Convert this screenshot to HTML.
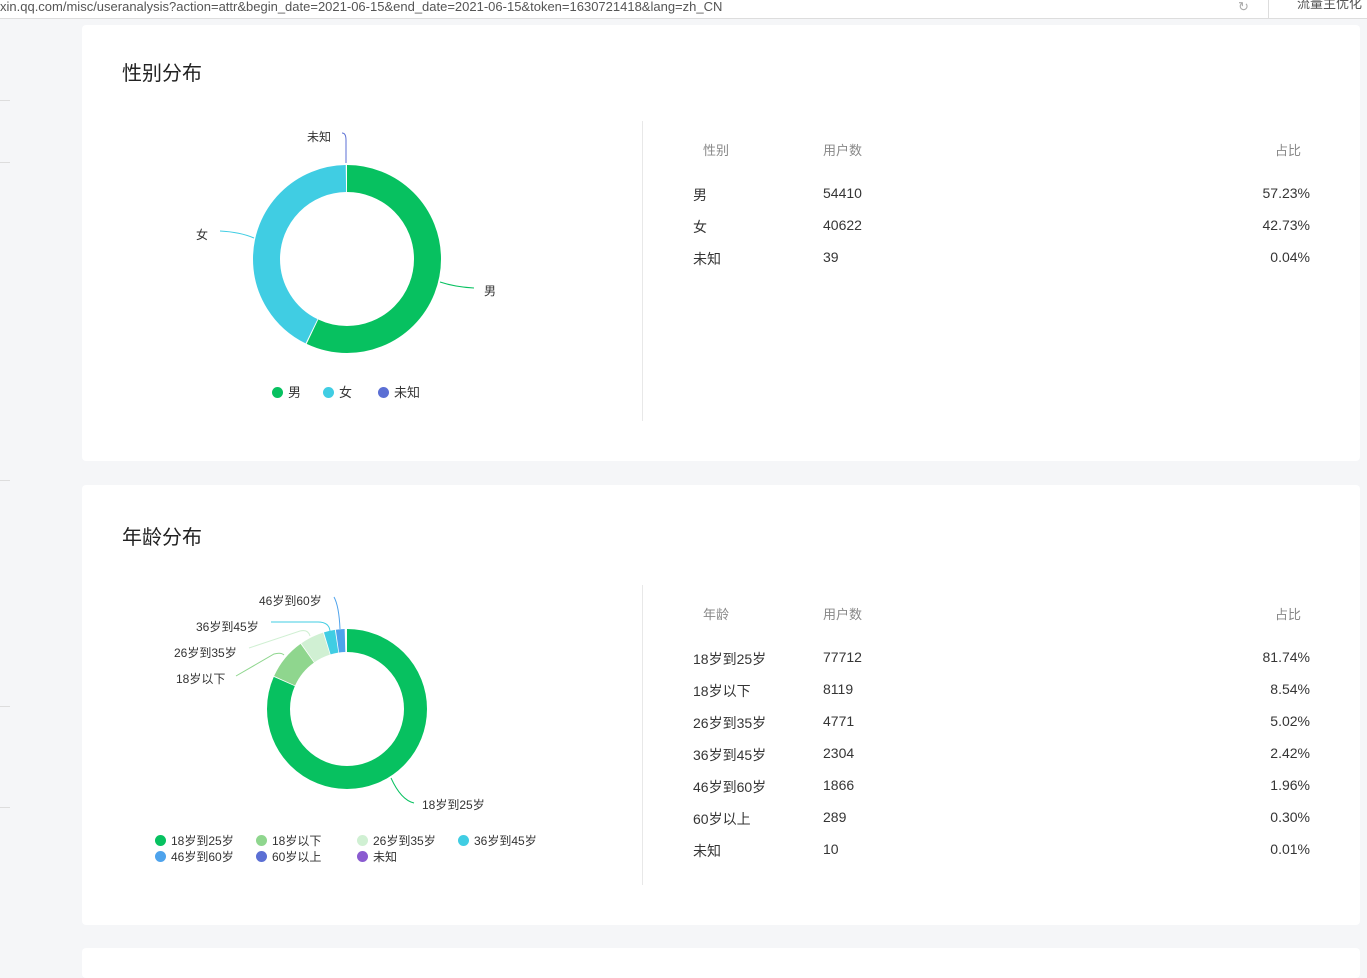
<!DOCTYPE html><html><head><meta charset="utf-8"><style>
body{margin:0;width:1367px;height:963px;background:#f5f6f8;font-family:"Liberation Sans","Noto Sans CJK SC",sans-serif;position:relative;overflow:hidden;color:#353535}
.bar{position:absolute;left:0;top:0;width:1367px;height:18px;background:#fff;border-bottom:1px solid #ddd;font-size:13px;color:#555;line-height:14px}
.card{position:absolute;left:82px;width:1278px;background:#fff;border-radius:4px}
.t{position:absolute;font-size:19px;color:#222}
.a{position:absolute;font-size:14px;white-space:nowrap}
.h{position:absolute;font-size:13px;color:#888}
.r{text-align:right;width:100px}
.div{position:absolute;left:560px;width:1px;background:#e8e8e8}
.s{position:absolute;font-size:12px;color:#333;white-space:nowrap}
.dot{display:inline-block;width:11px;height:11px;border-radius:50%;vertical-align:-1px;margin-right:5px}
</style></head><body>
<div class="bar"><span style="position:absolute;left:0;top:0">xin.qq.com/misc/useranalysis?action=attr&amp;begin_date=2021-06-15&amp;end_date=2021-06-15&amp;token=1630721418&amp;lang=zh_CN</span><span style="position:absolute;left:1238px;top:0;color:#aaa">↻</span><span style="position:absolute;left:1268px;top:0;width:1px;height:18px;background:#ddd"></span><span style="position:absolute;left:1297px;top:-3px">流量主优化</span></div>
<div style="position:absolute;left:0;top:100px;width:10px;height:1px;background:#ddd"></div>
<div style="position:absolute;left:0;top:162px;width:10px;height:1px;background:#ddd"></div>
<div style="position:absolute;left:0;top:480px;width:10px;height:1px;background:#ddd"></div>
<div style="position:absolute;left:0;top:706px;width:10px;height:1px;background:#ddd"></div>
<div style="position:absolute;left:0;top:807px;width:10px;height:1px;background:#ddd"></div>

<div class="card" style="top:25px;height:436px">
<div class="t" style="left:40px;top:32px;font-size:20px">性别分布</div>
<div class="div" style="top:96px;height:300px"></div>
<div class="h" style="left:621px;top:115px">性别</div><div class="h" style="left:741px;top:115px">用户数</div><div class="h r" style="left:1119px;top:115px">占比</div>
<div class="a" style="left:611px;top:160px">男</div><div class="a" style="left:741px;top:160px">54410</div><div class="a r" style="left:1128px;top:160px">57.23%</div>
<div class="a" style="left:611px;top:192px">女</div><div class="a" style="left:741px;top:192px">40622</div><div class="a r" style="left:1128px;top:192px">42.73%</div>
<div class="a" style="left:611px;top:224px">未知</div><div class="a" style="left:741px;top:224px">39</div><div class="a r" style="left:1128px;top:224px">0.04%</div>
</div>
<div class="card" style="top:485px;height:440px">
<div class="t" style="left:40px;top:36px;font-size:20px">年龄分布</div>
<div class="div" style="top:100px;height:300px"></div>
<div class="h" style="left:621px;top:119px">年龄</div><div class="h" style="left:741px;top:119px">用户数</div><div class="h r" style="left:1119px;top:119px">占比</div>
<div class="a" style="left:611px;top:164px">18岁到25岁</div><div class="a" style="left:741px;top:164px">77712</div><div class="a r" style="left:1128px;top:164px">81.74%</div>
<div class="a" style="left:611px;top:196px">18岁以下</div><div class="a" style="left:741px;top:196px">8119</div><div class="a r" style="left:1128px;top:196px">8.54%</div>
<div class="a" style="left:611px;top:228px">26岁到35岁</div><div class="a" style="left:741px;top:228px">4771</div><div class="a r" style="left:1128px;top:228px">5.02%</div>
<div class="a" style="left:611px;top:260px">36岁到45岁</div><div class="a" style="left:741px;top:260px">2304</div><div class="a r" style="left:1128px;top:260px">2.42%</div>
<div class="a" style="left:611px;top:292px">46岁到60岁</div><div class="a" style="left:741px;top:292px">1866</div><div class="a r" style="left:1128px;top:292px">1.96%</div>
<div class="a" style="left:611px;top:324px">60岁以上</div><div class="a" style="left:741px;top:324px">289</div><div class="a r" style="left:1128px;top:324px">0.30%</div>
<div class="a" style="left:611px;top:356px">未知</div><div class="a" style="left:741px;top:356px">10</div><div class="a r" style="left:1128px;top:356px">0.01%</div>
</div>
<div class="card" style="top:948px;height:30px"></div>

<svg style="position:absolute;left:0;top:0" width="1367" height="963">
<g transform="rotate(-90 347 259)" fill="none" stroke-width="27">
<circle cx="347" cy="259" r="80.5" stroke="#07c160" stroke-dasharray="288.5 600"/>
<circle cx="347" cy="259" r="80.5" stroke="#40cde3" stroke-dasharray="215 600" stroke-dashoffset="-289.5"/>
</g>
<g fill="none" stroke-width="1">
<path d="M346 163 L346 140 Q346 133 342 133" stroke="#5b6fd4"/>
<path d="M254 238 Q240 232 220 231" stroke="#40cde3"/>
<path d="M440 282 Q455 287 474 288" stroke="#07c160"/>
</g>
<g transform="rotate(-90 347 709)" fill="none" stroke-width="23">
<circle cx="347" cy="709" r="68.5" stroke="#07c160" stroke-dasharray="351 600"/>
<circle cx="347" cy="709" r="68.5" stroke="#8fd68e" stroke-dasharray="36 600" stroke-dashoffset="-351.8"/>
<circle cx="347" cy="709" r="68.5" stroke="#d0f0d3" stroke-dasharray="20.8 600" stroke-dashoffset="-388.6"/>
<circle cx="347" cy="709" r="68.5" stroke="#40cde3" stroke-dasharray="9.6 600" stroke-dashoffset="-410.2"/>
<circle cx="347" cy="709" r="68.5" stroke="#4ea3ec" stroke-dasharray="7.6 600" stroke-dashoffset="-420.6"/>
</g>
<g fill="none" stroke-width="1">
<path d="M340 629 Q339 606 334 597" stroke="#4ea3ec"/>
<path d="M330 631 Q329 622 318 622 L271 622" stroke="#40cde3"/>
<path d="M310 636 Q308 629 300 631 L249 648" stroke="#d0f0d3"/>
<path d="M284 655 Q281 652 274 654 L236 676" stroke="#8fd68e"/>
<path d="M391 778 Q401 800 414 803" stroke="#07c160"/>
</g>
</svg>
<div class="s" style="left:307px;top:128px">未知</div>
<div class="s" style="left:196px;top:226px">女</div>
<div class="s" style="left:484px;top:282px">男</div>
<div class="a" style="left:272px;top:382px;font-size:13px"><span class="dot" style="background:#07c160"></span>男<span style="display:inline-block;width:22px"></span><span class="dot" style="background:#40cde3"></span>女<span style="display:inline-block;width:26px"></span><span class="dot" style="background:#5b6fd4"></span>未知</div>
<div class="s" style="left:259px;top:592px">46岁到60岁</div>
<div class="s" style="left:196px;top:618px">36岁到45岁</div>
<div class="s" style="left:174px;top:644px">26岁到35岁</div>
<div class="s" style="left:176px;top:670px">18岁以下</div>
<div class="s" style="left:422px;top:796px">18岁到25岁</div>
<div class="s" style="left:155px;top:832px"><span class="dot" style="background:#07c160"></span>18岁到25岁</div>
<div class="s" style="left:256px;top:832px"><span class="dot" style="background:#8fd68e"></span>18岁以下</div>
<div class="s" style="left:357px;top:832px"><span class="dot" style="background:#d0f0d3"></span>26岁到35岁</div>
<div class="s" style="left:458px;top:832px"><span class="dot" style="background:#40cde3"></span>36岁到45岁</div>
<div class="s" style="left:155px;top:848px"><span class="dot" style="background:#4ea3ec"></span>46岁到60岁</div>
<div class="s" style="left:256px;top:848px"><span class="dot" style="background:#5b6fd4"></span>60岁以上</div>
<div class="s" style="left:357px;top:848px"><span class="dot" style="background:#8a5bd0"></span>未知</div>
</body></html>
